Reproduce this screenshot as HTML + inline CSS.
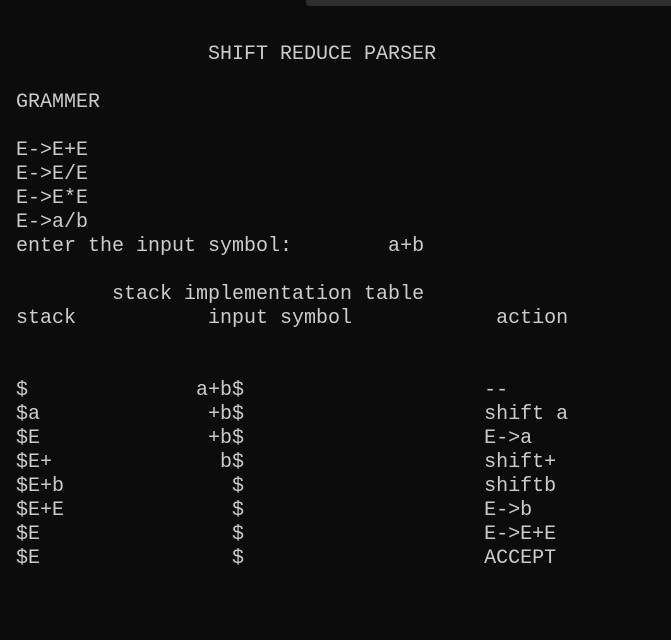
<!DOCTYPE html>
<html><head><style>
html,body{margin:0;padding:0;background:#0c0c0c;width:671px;height:640px;overflow:hidden;position:relative}
.bar{position:absolute;left:306px;top:0;width:370px;height:6px;background:#2e2e2e;border-radius:0 0 0 4px}
pre{position:absolute;left:16px;top:-5px;margin:0;font-family:"Liberation Mono",monospace;font-size:20px;line-height:24px;color:#cccccc}
</style></head><body>
<div class="bar"></div>
<pre>


                SHIFT REDUCE PARSER

GRAMMER

E->E+E
E->E/E
E->E*E
E->a/b
enter the input symbol:        a+b

        stack implementation table
stack           input symbol            action


$              a+b$                    --
$a              +b$                    shift a
$E              +b$                    E->a
$E+              b$                    shift+
$E+b              $                    shiftb
$E+E              $                    E->b
$E                $                    E->E+E
$E                $                    ACCEPT
</pre>
</body></html>
